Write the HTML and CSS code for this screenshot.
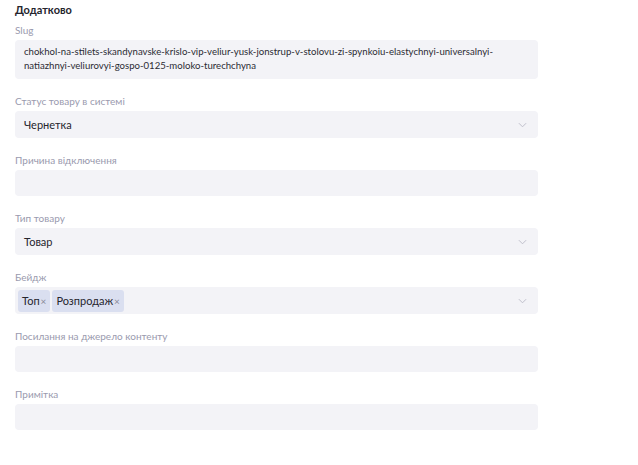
FILE: index.html
```html
<!DOCTYPE html>
<html lang="uk">
<head>
<meta charset="utf-8">
<link rel="stylesheet" href="styles.css">
</head>
<body>
<div class="panel">
  <h3 class="title">Додатково</h3>

  <div class="field">
    <div class="label">Slug</div>
    <div class="box slug">chokhol-na-stilets-skandynavske-krislo-vip-veliur-yusk-jonstrup-v-stolovu-zi-spynkoiu-elastychnyi-universalnyi-natiazhnyi-veliurovyi-gospo-0125-moloko-turechchyna</div>
  </div>

  <div class="field">
    <div class="label">Статус товару в системі</div>
    <div class="box select"><span class="value">Чернетка</span><svg class="chev" viewBox="0 0 10 6" width="9" height="6"><path d="M1 1l4 4 4-4" fill="none" stroke="#b9b9c6" stroke-width="1"/></svg></div>
  </div>

  <div class="field">
    <div class="label">Причина відключення</div>
    <div class="box"></div>
  </div>

  <div class="field">
    <div class="label">Тип товару</div>
    <div class="box select"><span class="value">Товар</span><svg class="chev" viewBox="0 0 10 6" width="9" height="6"><path d="M1 1l4 4 4-4" fill="none" stroke="#b9b9c6" stroke-width="1"/></svg></div>
  </div>

  <div class="field">
    <div class="label">Бейдж</div>
    <div class="box select tags">
      <div class="taglist">
        <span class="tag">Топ<span class="x">×</span></span>
        <span class="tag">Розпродаж<span class="x">×</span></span>
      </div>
      <svg class="chev" viewBox="0 0 10 6" width="9" height="6"><path d="M1 1l4 4 4-4" fill="none" stroke="#b9b9c6" stroke-width="1"/></svg>
    </div>
  </div>

  <div class="field">
    <div class="label">Посилання на джерело контенту</div>
    <div class="box"></div>
  </div>

  <div class="field">
    <div class="label">Примітка</div>
    <div class="box"></div>
  </div>
</div>
</body>
</html>
```

FILE: styles.css
```css
html, body {
  margin: 0;
  padding: 0;
  background: #ffffff;
}
body {
  font-family: "Lato", "Noto Sans", sans-serif;
  color: #2b2b33;
}
.panel {
  width: 523px;
  padding: 3px 0 0 15px;
  display: flex;
  flex-direction: column;
}
.title {
  margin: 0;
  font-size: 11px;
  font-weight: 700;
  line-height: 13px;
  color: #25252d;
}
.field {
  display: flex;
  flex-direction: column;
  gap: 4px;
  margin-top: 8px;
}
.field + .field {
  margin-top: 16px;
}
.label {
  font-size: 10px;
  line-height: 12px;
  color: #9a9aae;
}
.box {
  background: #f3f3f7;
  border-radius: 4px;
  height: 26px;
  box-sizing: border-box;
}
.slug {
  height: 39px;
  padding: 5px 9px;
  font-size: 9.6px;
  line-height: 14px;
  color: #2b2b33;
}
.select {
  display: flex;
  align-items: center;
  justify-content: space-between;
  padding: 0 11px 0 9px;
  height: 27px;
}
.value {
  font-size: 11px;
  color: #25252d;
}
.chev {
  flex: none;
}
.tags {
  padding-left: 3px;
}
.taglist {
  display: flex;
  gap: 2px;
}
.tag {
  display: flex;
  align-items: center;
  background: #dadff0;
  border-radius: 3px;
  height: 22px;
  padding: 0 4px;
  font-size: 11px;
  color: #25252d;
}
.x {
  font-size: 10px;
  color: #8a8a98;
  margin-left: 1px;
}
```
